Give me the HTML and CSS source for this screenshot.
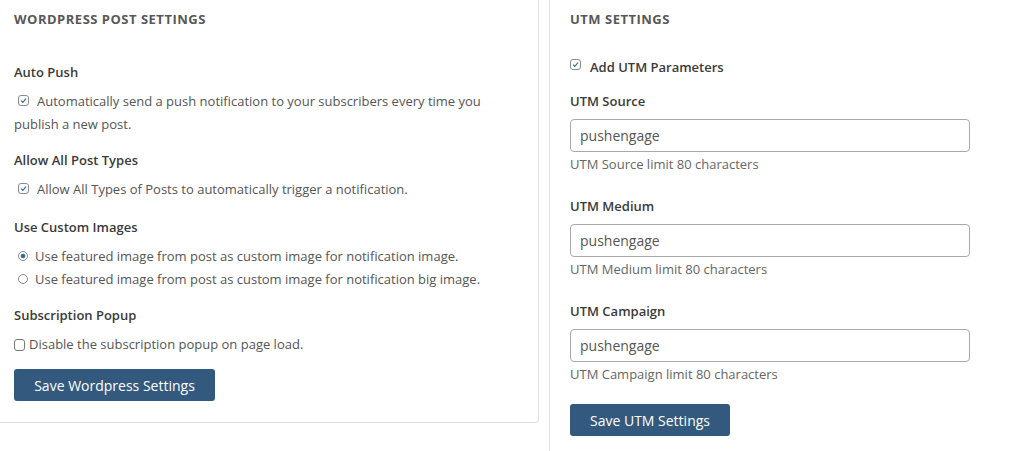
FILE: index.html
```html
<!DOCTYPE html>
<html>
<head>
<meta charset="utf-8">
<link rel="stylesheet" href="styles.css">
</head>
<body>
<div class="page">
  <section class="panel panel-left">
    <h2 class="title">WORDPRESS POST SETTINGS</h2>

    <div class="group first">
      <div class="label">Auto Push</div>
      <p class="opt"><span class="cb"><svg viewBox="0 0 11 11" width="11" height="11"><rect x="0.5" y="0.5" width="10" height="10" rx="2.5" fill="#fff" stroke="#8a8a8a"/><path d="M3 5.6 L4.8 7.4 L8 3.7" fill="none" stroke="#2f6f9f" stroke-width="1.2"/></svg></span>Automatically send a push notification to your subscribers every time you publish a new post.</p>
    </div>

    <div class="group">
      <div class="label">Allow All Post Types</div>
      <p class="opt"><span class="cb"><svg viewBox="0 0 11 11" width="11" height="11"><rect x="0.5" y="0.5" width="10" height="10" rx="2.5" fill="#fff" stroke="#8a8a8a"/><path d="M3 5.6 L4.8 7.4 L8 3.7" fill="none" stroke="#2f6f9f" stroke-width="1.2"/></svg></span>Allow All Types of Posts to automatically trigger a notification.</p>
    </div>

    <div class="group wide">
      <div class="label">Use Custom Images</div>
      <p class="opt radio-line"><span class="rd"><svg viewBox="0 0 10 10" width="10" height="10"><circle cx="5" cy="5" r="4.5" fill="#fff" stroke="#8a8a8a"/><circle cx="5" cy="5" r="2.3" fill="#2f6f9f"/></svg></span>Use featured image from post as custom image for notification image.</p>
      <p class="opt radio-line"><span class="rd"><svg viewBox="0 0 10 10" width="10" height="10"><circle cx="5" cy="5" r="4.5" fill="#fff" stroke="#8a8a8a"/></svg></span>Use featured image from post as custom image for notification big image.</p>
    </div>

    <div class="group">
      <div class="label">Subscription Popup</div>
      <p class="opt plain"><span class="cb-plain"><svg viewBox="0 0 11 12" width="11" height="12"><rect x="0.5" y="0.5" width="10" height="11" rx="2.5" fill="#fff" stroke="#777"/></svg></span>Disable the subscription popup on page load.</p>
    </div>

    <button class="btn btn-wp" type="button">Save Wordpress Settings</button>
  </section>

  <section class="panel panel-right">
    <h2 class="title">UTM SETTINGS</h2>

    <div class="add-utm"><span class="cb raised"><svg viewBox="0 0 11 11" width="11" height="11"><rect x="0.5" y="0.5" width="10" height="10" rx="2.5" fill="#fff" stroke="#8a8a8a"/><path d="M3 5.6 L4.8 7.4 L8 3.7" fill="none" stroke="#2f6f9f" stroke-width="1.2"/></svg></span>Add UTM Parameters</div>

    <div class="field first-field">
      <div class="label">UTM Source</div>
      <input class="input" type="text" value="pushengage">
      <div class="help">UTM Source limit 80 characters</div>
    </div>

    <div class="field">
      <div class="label">UTM Medium</div>
      <input class="input" type="text" value="pushengage">
      <div class="help">UTM Medium limit 80 characters</div>
    </div>

    <div class="field">
      <div class="label">UTM Campaign</div>
      <input class="input" type="text" value="pushengage">
      <div class="help">UTM Campaign limit 80 characters</div>
    </div>

    <button class="btn btn-utm" type="button">Save UTM Settings</button>
  </section>
</div>
</body>
</html>
```
FILE: styles.css
```css
* { box-sizing: border-box; }
html, body { margin: 0; padding: 0; background: #fff; }
body {
  font-family: "Open Sans", "Liberation Sans", sans-serif;
  font-size: 13px;
  color: #555;
  overflow: hidden;
}
.page {
  display: flex;
  align-items: flex-start;
  gap: 10px;
  height: 451px;
}
.panel-left {
  width: 539px;
  padding: 9px 14px 21px 14px;
  border-right: 1px solid #dedede;
  border-bottom: 1px solid #dedede;
  border-bottom-right-radius: 4px;
}
.panel-right {
  flex: 1;
  align-self: stretch;
  border-left: 1px solid #dedede;
  padding: 9px 20px 0 20px;
}
.title {
  margin: 0;
  font-size: 13px;
  line-height: 20px;
  font-weight: 700;
  color: #585858;
  letter-spacing: 0.5px;
}
.label {
  font-size: 13px;
  line-height: 20px;
  font-weight: 600;
  color: #3a3a3a;
}
.group { margin-top: 14px; }
.group.first { margin-top: 33px; }
.group.wide { margin-top: 16px; }
.opt {
  margin: 8px 0 0 0;
  line-height: 23px;
  color: #555;
}
.radio-line + .radio-line { margin-top: 0; }
.cb, .rd, .cb-plain {
  display: inline-block;
  vertical-align: middle;
  line-height: 0;
  position: relative;
  top: -2px;
}
.cb { margin: 0 8px 0 4px; }
.rd { margin: 0 7px 0 4px; }
.cb-plain { margin: 0 4px 0 0; top: -1px; }
.cb.raised { margin: 0 9px 0 0; top: -4px; }
.btn {
  display: block;
  height: 32px;
  border: 0;
  border-radius: 3px;
  background: #335a7e;
  color: #fff;
  font-family: "Open Sans", "Liberation Sans", sans-serif;
  font-size: 14px;
  padding: 0;
  cursor: pointer;
}
.btn-wp { width: 201px; margin-top: 13px; }
.btn-utm { width: 160px; margin-top: 20px; }
.add-utm {
  margin-top: 28px;
  line-height: 20px;
  font-weight: 600;
  color: #3a3a3a;
}
.field { margin-top: 22px; }
.field.first-field { margin-top: 14px; }
.input {
  display: block;
  width: 400px;
  height: 33px;
  margin-top: 8px;
  border: 1px solid #a9a9a9;
  border-radius: 4px;
  padding: 0 9px;
  font-family: "Open Sans", "Liberation Sans", sans-serif;
  font-size: 14px;
  color: #555;
  background: #fff;
  outline: none;
}
.help {
  margin-top: 2px;
  line-height: 20px;
  color: #666;
}
```
